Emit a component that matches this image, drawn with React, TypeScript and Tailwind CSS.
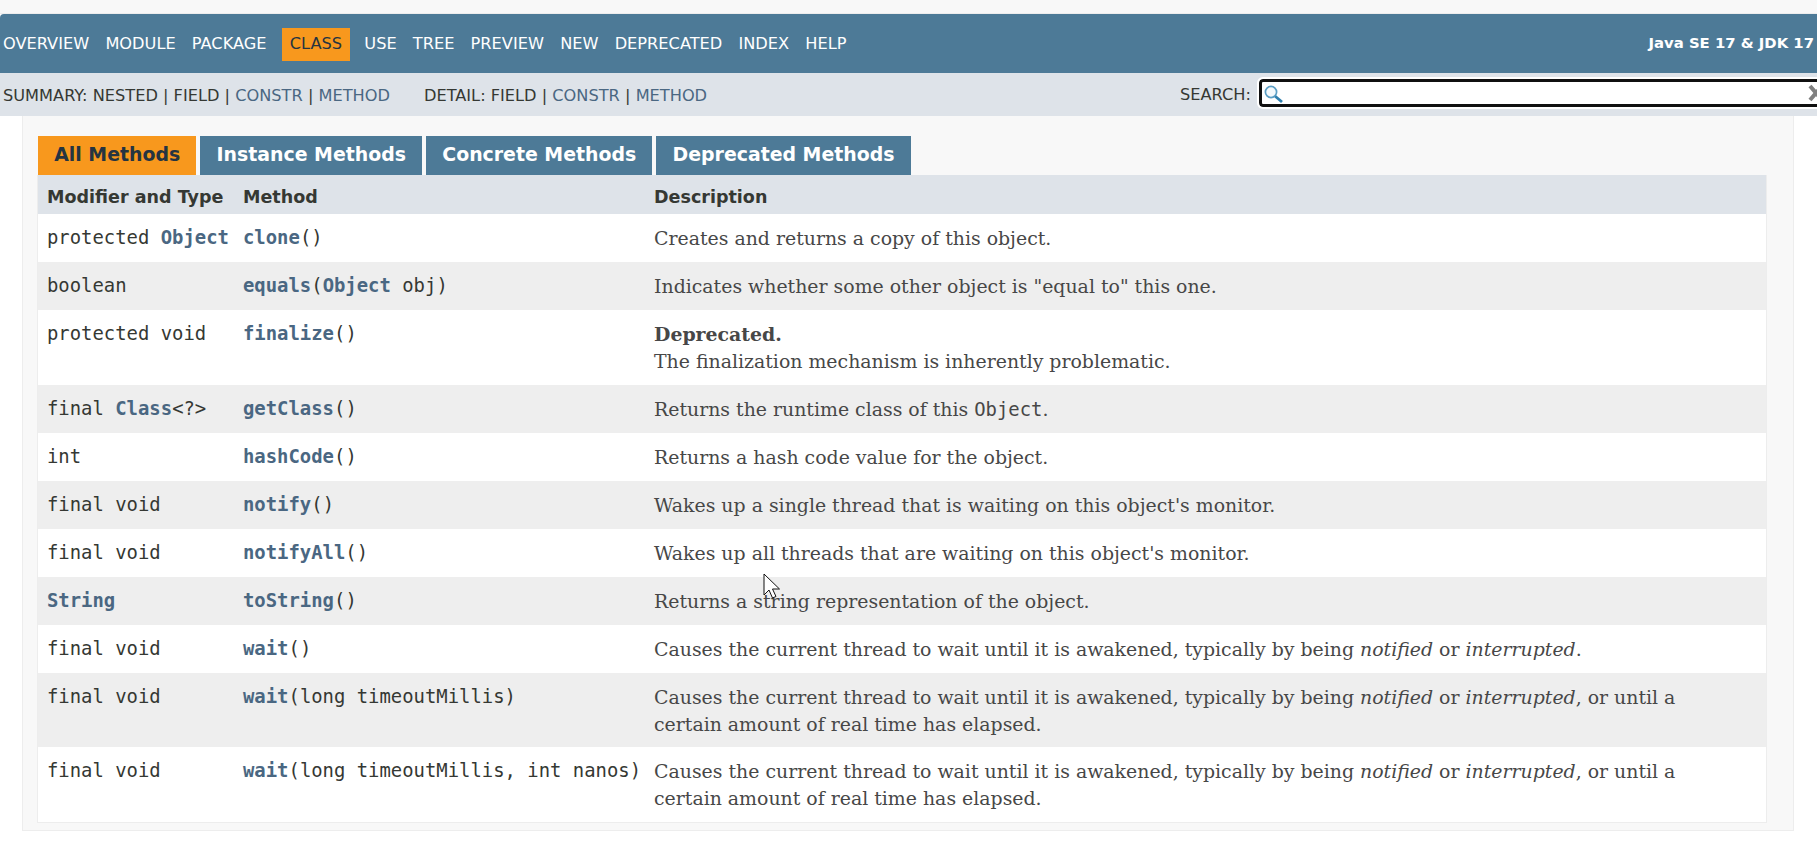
const sans = "font-['DejaVu_Sans',sans-serif]";

const navItems = ["OVERVIEW", "MODULE", "PACKAGE", "CLASS", "USE", "TREE", "PREVIEW", "NEW", "DEPRECATED", "INDEX", "HELP"];
const tabs = ["All Methods", "Instance Methods", "Concrete Methods", "Deprecated Methods"];

const lnk = "font-bold text-[#4A6782]";

type Row = { h: string; mod: React.ReactNode; name: string; args?: React.ReactNode; desc: React.ReactNode };

const wakeup = "Causes the current thread to wait until it is awakened, typically by being ";

const rows: Row[] = [
  { h: "h-[48px]", mod: <>protected <span className={lnk}>Object</span></>, name: "clone", desc: "Creates and returns a copy of this object." },
  { h: "h-[48px]", mod: "boolean", name: "equals", args: <><span className={lnk}>Object</span> obj</>, desc: 'Indicates whether some other object is "equal to" this one.' },
  { h: "h-[75px]", mod: "protected void", name: "finalize", desc: <><div className="font-bold">Deprecated.</div><div>The finalization mechanism is inherently problematic.</div></> },
  { h: "h-[48px]", mod: <>final <span className={lnk}>Class</span>&lt;?&gt;</>, name: "getClass", desc: <>Returns the runtime class of this <code className="font-['DejaVu_Sans_Mono',monospace]">Object</code>.</> },
  { h: "h-[48px]", mod: "int", name: "hashCode", desc: "Returns a hash code value for the object." },
  { h: "h-[48px]", mod: "final void", name: "notify", desc: "Wakes up a single thread that is waiting on this object's monitor." },
  { h: "h-[48px]", mod: "final void", name: "notifyAll", desc: "Wakes up all threads that are waiting on this object's monitor." },
  { h: "h-[48px]", mod: <span className={lnk}>String</span>, name: "toString", desc: "Returns a string representation of the object." },
  { h: "h-[48px]", mod: "final void", name: "wait", desc: <>{wakeup}<i>notified</i> or <i>interrupted</i>.</> },
  { h: "h-[74px]", mod: "final void", name: "wait", args: "long timeoutMillis", desc: <>{wakeup}<i>notified</i> or <i>interrupted</i>, or until a certain amount of real time has elapsed.</> },
  { h: "h-[75px]", mod: "final void", name: "wait", args: "long timeoutMillis, int nanos", desc: <>{wakeup}<i>notified</i> or <i>interrupted</i>, or until a certain amount of real time has elapsed.</> },
];

export default function App() {
  return (
    <div className={`relative h-[845px] w-[1817px] overflow-hidden bg-white text-[16.2px] ${sans}`}>
      <div className="h-[14px] border-b border-[#ededed] bg-[#f8f8f8]" />

      <div className="flex h-[59px] items-center justify-between rounded-tl-[4px] bg-[#4D7A97] pl-[3px] pr-[3px] text-white">
        <nav className="mt-[1px] flex items-center gap-[16.2px]">
          {navItems.map((n) => (
            <span key={n} className={n === "CLASS" ? "-ml-[1px] -mr-[2px] flex h-[33px] items-center bg-[#F8981D] px-[8px] text-[#253441]" : ""}>
              {n}
            </span>
          ))}
        </nav>
        <b className="text-[14.85px]">Java SE 17 &amp; JDK 17</b>
      </div>

      <div className="flex h-[43px] items-center bg-[#dee3e9] pl-[3px] text-[#353833]">
        <div className="mt-[4px] flex w-[1177px] shrink-0">
          <span>SUMMARY: NESTED | FIELD | <span className="text-[#4A6782]">CONSTR</span> | <span className="text-[#4A6782]">METHOD</span></span>
          <span className="ml-[34px]">DETAIL: FIELD | <span className="text-[#4A6782]">CONSTR</span> | <span className="text-[#4A6782]">METHOD</span></span>
        </div>
        <div className="-mt-[3px] flex shrink-0 items-center">
          <span className="relative top-[2px] mr-[8px]">SEARCH:</span>
          <div className="relative h-[28px] w-[640px] shrink-0 rounded-[4px] border-[3px] border-[#101010] bg-white outline outline-2 outline-white">
            <svg className="absolute left-[1px] top-[2px]" width="22" height="20" viewBox="0 0 22 20" fill="none">
              <circle cx="8" cy="8" r="5.6" stroke="#5b9ec4" strokeWidth="1.7" fill="#f4f9fc" />
              <path d="M12.2 12.2 L19 18" stroke="#2f7fae" strokeWidth="2.8" />
            </svg>
            <svg className="absolute left-[545px] top-[2px]" width="20" height="18" viewBox="0 0 20 18" fill="none">
              <path d="M3 2 L15 16 M15 2 L3 16" stroke="#808080" strokeWidth="4" />
            </svg>
          </div>
        </div>
      </div>

      <div className="ml-[22px] h-[715px] w-[1772px] border-x border-b border-[#ededed] bg-[#f8f8f8] pl-[14px] pr-[26px] pt-[20px]">
        <div className="flex gap-[4px] pl-[1px]">
          {tabs.map((t, i) => (
            <div
              key={t}
              className={`flex h-[39px] items-center px-[16.2px] pb-[2px] text-[18.9px] font-bold ${i === 0 ? "bg-[#F8981D] text-[#253441]" : "bg-[#4D7A97] text-white"}`}
            >
              {t}
            </div>
          ))}
        </div>
        <div className="border-x border-b border-[#ededed]">
          <div className="grid h-[39px] grid-cols-[196px_411px_1fr] items-center bg-[#dee3e9] pl-[9px] pt-[5px] text-[17.55px] font-bold text-[#353833]">
            <div>Modifier and Type</div>
            <div>Method</div>
            <div>Description</div>
          </div>
          {rows.map((r, i) => (
            <div
              key={i}
              className={`grid grid-cols-[196px_411px_1fr] pl-[9px] pt-[11px] text-[18.9px] text-[#353833] ${r.h} ${i % 2 === 0 ? "bg-white" : "bg-[#eeeeee]"}`}
            >
              <div className="whitespace-nowrap font-['DejaVu_Sans_Mono',monospace] leading-[25px]">{r.mod}</div>
              <div className="whitespace-nowrap font-['DejaVu_Sans_Mono',monospace] leading-[25px]">
                <span className={lnk}>{r.name}</span>({r.args})
              </div>
              <div className="pr-[20px] font-['DejaVu_Serif',serif] leading-[26.5px] text-[#474747]">{r.desc}</div>
            </div>
          ))}
        </div>
      </div>

      <svg className="absolute left-[763px] top-[573px]" width="20" height="28" viewBox="0 0 20 28">
        <path d="M1 1 L1 22 L6 17 L9.5 25 L13 23.5 L9.5 16 L16.5 16 Z" fill="#fff" stroke="#111" strokeWidth="1" />
      </svg>
    </div>
  );
}
